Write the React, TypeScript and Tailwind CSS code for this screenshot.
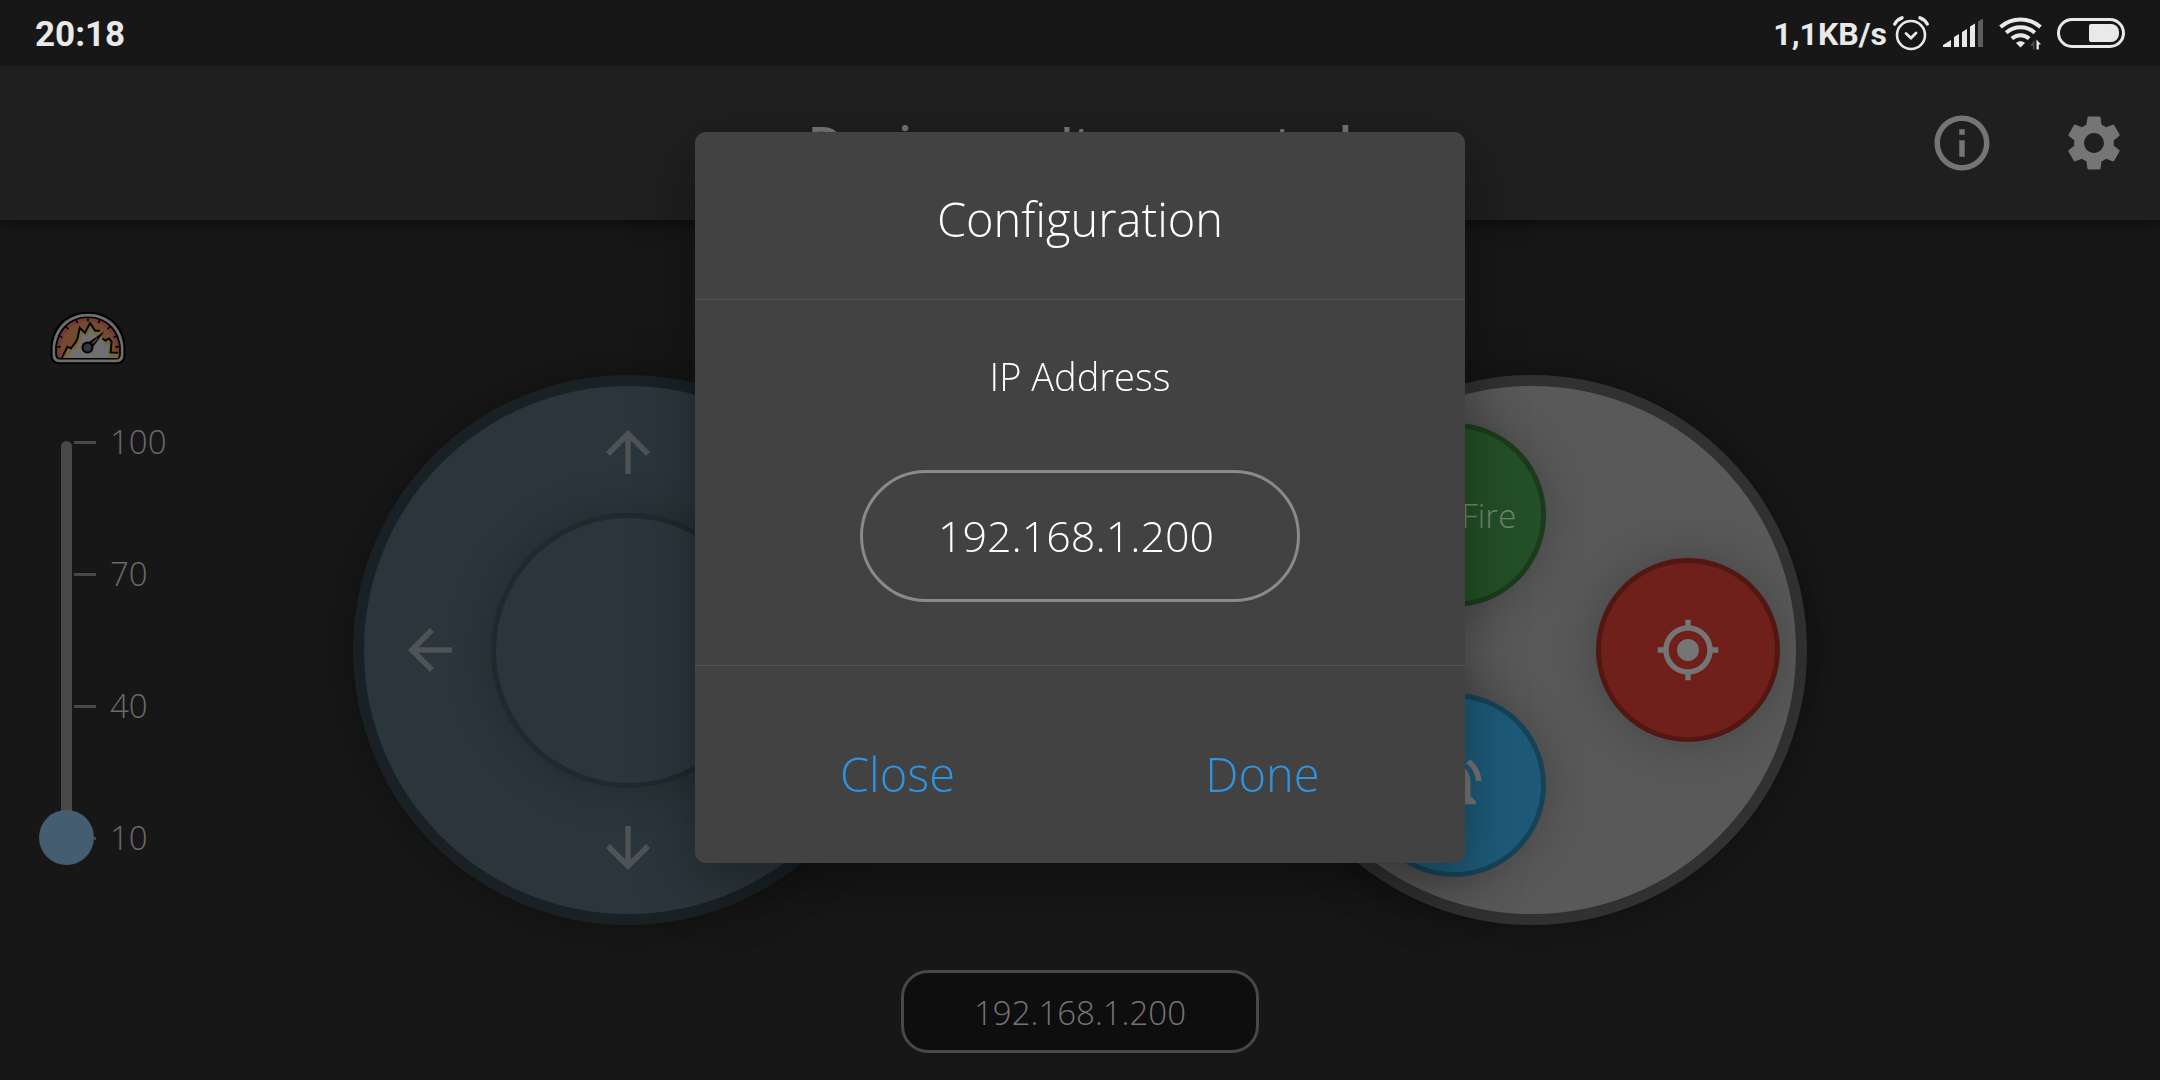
import { useState } from "react";
import { MdArrowBack, MdArrowDownward, MdArrowForward, MdArrowUpward, MdGpsFixed, MdInfoOutline, MdNotificationsActive, MdSettings } from "react-icons/md";

function StatusBar() {
  return (
    <div className="relative z-10 flex h-[66px] items-center justify-between bg-[#171717] px-[35px] font-['Roboto'] font-bold text-[#e9e9e9]">
      <span className="pt-0.5 text-[35px] leading-none">20:18</span>
      <div className="flex items-center">
        <span className="mr-1.5 pt-0.5 text-[32px] leading-none">1,1KB/s</span>
        <svg className="mr-3.5 h-[36px] w-[36px]" viewBox="0 0 36 36" fill="none" stroke="currentColor" aria-label="Alarm">
          <circle cx="18" cy="20" r="14" strokeWidth="2.6" />
          <path d="M13 18.5l5 4.5 5-5" strokeWidth="2.8" strokeLinecap="round" />
          <path d="M1.8 9C3.5 6 6 3.8 9 2.8M34.2 9C32.5 6 30 3.8 27 2.8" strokeWidth="3.4" strokeLinecap="round" />
        </svg>
        <svg className="mr-4 h-[30px] w-[40px]" viewBox="0 0 40 30" fill="currentColor" aria-label="Signal">
          <path d="M0 29V27L8 22V29ZM11 29V19L16 16V29ZM19 29V14L24 11V29ZM27 29V8.5L32 5.5V29Z" />
          <path d="M35 29V3.5L40 .5V29Z" fill="#5d5d5d" />
        </svg>
        <svg className="mr-3.5 h-[36px] w-[44px]" viewBox="0 0 44 36" fill="none" stroke="currentColor" strokeWidth="4" aria-label="Wi-Fi">
          <path d="M1.5 12C13 2 30 2 41.5 12M7.2 17.8C15.5 10.5 27.5 10.5 35.8 17.8M12.8 23.5C18 19 25 19 30.2 23.5" />
          <path d="M17 28C19.5 25.8 23.5 25.8 26 28L21.5 32.5Z" fill="currentColor" stroke="none" />
          <path d="M31.5 30L35.5 25V34.5H34V31H31.5Z" fill="#4a4a4a" stroke="none" />
          <path d="M37.5 34.5V24.5L42 29.5H39.8V34.5Z" fill="currentColor" stroke="none" />
        </svg>
        <div className="flex h-[30px] w-[68px] items-center justify-end rounded-full border-[3px] border-[#e9e9e9] pr-[3px]" aria-label="Battery">
          <div className="h-[18px] w-[30px] rounded-l-xs rounded-r-lg bg-[#e9e9e9]" />
        </div>
      </div>
    </div>
  );
}

function Gauge() {
  return (
    <svg className="h-[54px] w-[76px]" viewBox="0 0 74 51" aria-label="Speed">
      <path d="M37 0C16 0 1 14 .5 34V43Q1 51 9 51H65Q73 51 73.5 43V34C73 14 58 0 37 0Z" fill="#000" />
      <path d="M37 2C18 2 4 15 2.5 34V42Q2.5 49 9 49H65Q71.5 49 71.5 42V34C70 15 56 2 37 2Z" fill="#6f6f6f" />
      <path d="M37 4.5C20 4.5 7 16 5 34V41Q5 46.5 10 46.5H64Q69 46.5 69 41V34C67 16 54 4.5 37 4.5Z" fill="#000" />
      <path d="M37 6C21 6 9 17 6.8 34V40Q6.8 45 10 45H64Q67.2 45 67.2 40V34C65 17 53 6 37 6Z" fill="#713a38" />
      <path d="M37 9C23 9 12 19 10 36V45H64V36C62 19 51 9 37 9Z" fill="#75492f" />
      <path d="M11.5 45L15 38L17 34L20.5 35.5L25.5 29L27 25L29 15.5L34 20.5L39 11L44 18.5L48.5 18.5L51 26L54 28L57.5 26L60 29L59 39.5L66.5 40V45Z" fill="#75683a" />
      <path d="M17 45L21 39L27 34L30 28L32 21L36 24L39.5 17L44 22L50 24L53 31L57 32L57 45Z" fill="#6f6f6f" />
      <path d="M11.5 45L15 38L17 34L20.5 35.5L25.5 29L27 25L29 15.5L34 20.5L39 11L44 18.5L48.5 18.5M51 26L54 28L57.5 26L60 29L59 39.5L66.5 40" fill="none" stroke="#000" strokeWidth="1.9" />
      <path d="M37 5V9.5M25 7L27 11M49 7L47 11M15 14L18 17M59 14L56 17M8 23L12 25M66 23L62 25M6 34H10.5M68 34H63.5" stroke="#000" strokeWidth="1.5" />
      <path d="M34 32L53 19L40 37Z" fill="#000" />
      <path d="M41 31L46 26" stroke="#713a38" strokeWidth="1.5" />
      <circle cx="36.5" cy="34.8" r="5.8" fill="#000" />
      <circle cx="36.5" cy="34.8" r="3.8" fill="#333538" />
    </svg>
  );
}

function SpeedSlider() {
  const [speed, setSpeed] = useState(10);
  return (
    <div className="col-start-1 row-span-3 row-start-1 flex flex-col pt-[91px] pl-[38px]">
      <div className="ml-3">
        <Gauge />
      </div>
      <div className="mt-[50px] flex">
        <div className="relative h-[450px] w-14">
          <div className="mx-auto mt-[26px] h-[397px] w-[11px] rounded-full bg-[#484848]" />
          <input
            type="range"
            min={10}
            max={100}
            step={30}
            value={speed}
            onChange={(e) => setSpeed(Number(e.target.value))}
            aria-label="Speed"
            className="absolute inset-0 h-[450px] w-14 appearance-none bg-transparent [direction:rtl] [writing-mode:vertical-lr] [&::-webkit-slider-thumb]:h-[55px] [&::-webkit-slider-thumb]:w-[55px] [&::-webkit-slider-thumb]:appearance-none [&::-webkit-slider-thumb]:rounded-full [&::-webkit-slider-thumb]:bg-[#445d70]"
          />
        </div>
        <ul className="flex flex-col justify-between py-1 text-[33px] leading-[46px] font-light text-[#6a6a6a]">
          {[100, 70, 40, 10].map((n) => (
            <li key={n} className="flex items-center">
              <span className={n === speed ? "mr-3.5 h-[3px] w-[2px] bg-[#484848]" : "mr-3.5 -ml-5 h-[3px] w-[22px] bg-[#484848]"} />
              {n}
            </li>
          ))}
        </ul>
      </div>
    </div>
  );
}

function Joystick() {
  return (
    <div className="col-start-2 row-start-2 flex h-[550px] w-[550px] items-center justify-between rounded-full border-11 border-[#192125] bg-[#2b363c] px-[33px] text-[66px] text-[#4e5456] shadow-[0_0_44px_4px_#00000044]">
      <MdArrowBack />
      <div className="flex h-full flex-col items-center justify-between py-[33px]">
        <MdArrowUpward />
        <div className="h-[275px] w-[275px] rounded-full border-5 border-[#20292e] bg-[#2b363c] shadow-[0_0_44px_#00000040]" />
        <MdArrowDownward />
      </div>
      <MdArrowForward />
    </div>
  );
}

function ActionPad() {
  return (
    <div className="col-start-4 row-start-2 flex h-[550px] w-[550px] items-center justify-center gap-[50px] rounded-full border-11 border-[#313131] bg-[#595959] pl-[78px] text-[#757575] shadow-[0_0_44px_4px_#00000044]">
      <div className="flex flex-col gap-[86px]">
        <button className="flex h-[184px] w-[184px] items-center justify-center rounded-full border-5 border-[#1b3c1c] bg-[#235026] pt-0.5 pr-2 text-[33px] font-light whitespace-nowrap text-[#728673] shadow-[0_0_44px_4px_#00000033]">
          Auto Fire
        </button>
        <button aria-label="Alert" className="flex h-[184px] w-[184px] items-center justify-center rounded-full border-5 border-[#164358] bg-[#1e5a78] text-[66px] shadow-[0_0_44px_4px_#00000033]">
          <MdNotificationsActive />
        </button>
      </div>
      <button aria-label="Aim" className="flex h-[184px] w-[184px] items-center justify-center rounded-full border-5 border-[#521713] bg-[#70201a] text-[66px] shadow-[0_0_44px_4px_#00000033]">
        <MdGpsFixed />
      </button>
    </div>
  );
}

function ConfigurationDialog() {
  const [ip, setIp] = useState("192.168.1.200");
  return (
    <div className="fixed inset-0 flex items-start justify-center pt-[132px]">
      <div role="dialog" aria-labelledby="dialog-title" className="w-[770px] rounded-[11px] bg-[#424242] font-light text-white shadow-[0_20px_60px_0_#00000059]">
        <h2 id="dialog-title" className="border-b border-[#555555] pt-[53px] pb-[46px] text-center text-[47px] leading-[68px]">
          Configuration
        </h2>
        <div className="flex flex-col items-center border-b border-[#555555] pt-[49px] pb-[63px]">
          <label htmlFor="ip" className="text-[38px] leading-[54px]">
            IP Address
          </label>
          <input
            id="ip"
            value={ip}
            onChange={(e) => setIp(e.target.value)}
            className="mt-[67px] h-[132px] w-[440px] rounded-full border-3 border-[#8a8a8a] bg-transparent pr-2 pb-0.5 text-center text-[43px] outline-none"
          />
        </div>
        <div className="flex px-5 pt-[86px] pb-[67px] text-[47px] leading-[44px] text-[#2f93e0]">
          <button className="flex-1">Close</button>
          <button className="flex-1">Done</button>
        </div>
      </div>
    </div>
  );
}

export default function App() {
  return (
    <div className="flex min-h-screen flex-col bg-[#171717] font-['Open_Sans',sans-serif]">
      <StatusBar />
      <header className="grid h-[154px] grid-cols-[1fr_auto_1fr] items-center bg-[#1f1f1f] px-[33px] text-[#757575] shadow-[0_4px_14px_#00000080]">
        <h1 className="col-start-2 text-[49px] leading-[68px] font-semibold">Device can't connected</h1>
        <div className="flex justify-end gap-[66px] text-[66px]">
          <button aria-label="Information">
            <MdInfoOutline />
          </button>
          <button aria-label="Settings">
            <MdSettings />
          </button>
        </div>
      </header>
      <main className="grid flex-1 grid-cols-[1fr_auto_1fr_auto_1fr] grid-rows-[1fr_auto_1fr]">
        <SpeedSlider />
        <Joystick />
        <ActionPad />
        <output className="col-span-5 col-start-1 row-start-3 mb-[27px] flex h-[83px] w-[358px] items-center justify-center self-end justify-self-center rounded-[27px] border-3 border-[#484848] bg-[#0e0e0e] pt-0.5 text-[33px] font-light text-[#757575]">
          192.168.1.200
        </output>
      </main>
      <ConfigurationDialog />
    </div>
  );
}
